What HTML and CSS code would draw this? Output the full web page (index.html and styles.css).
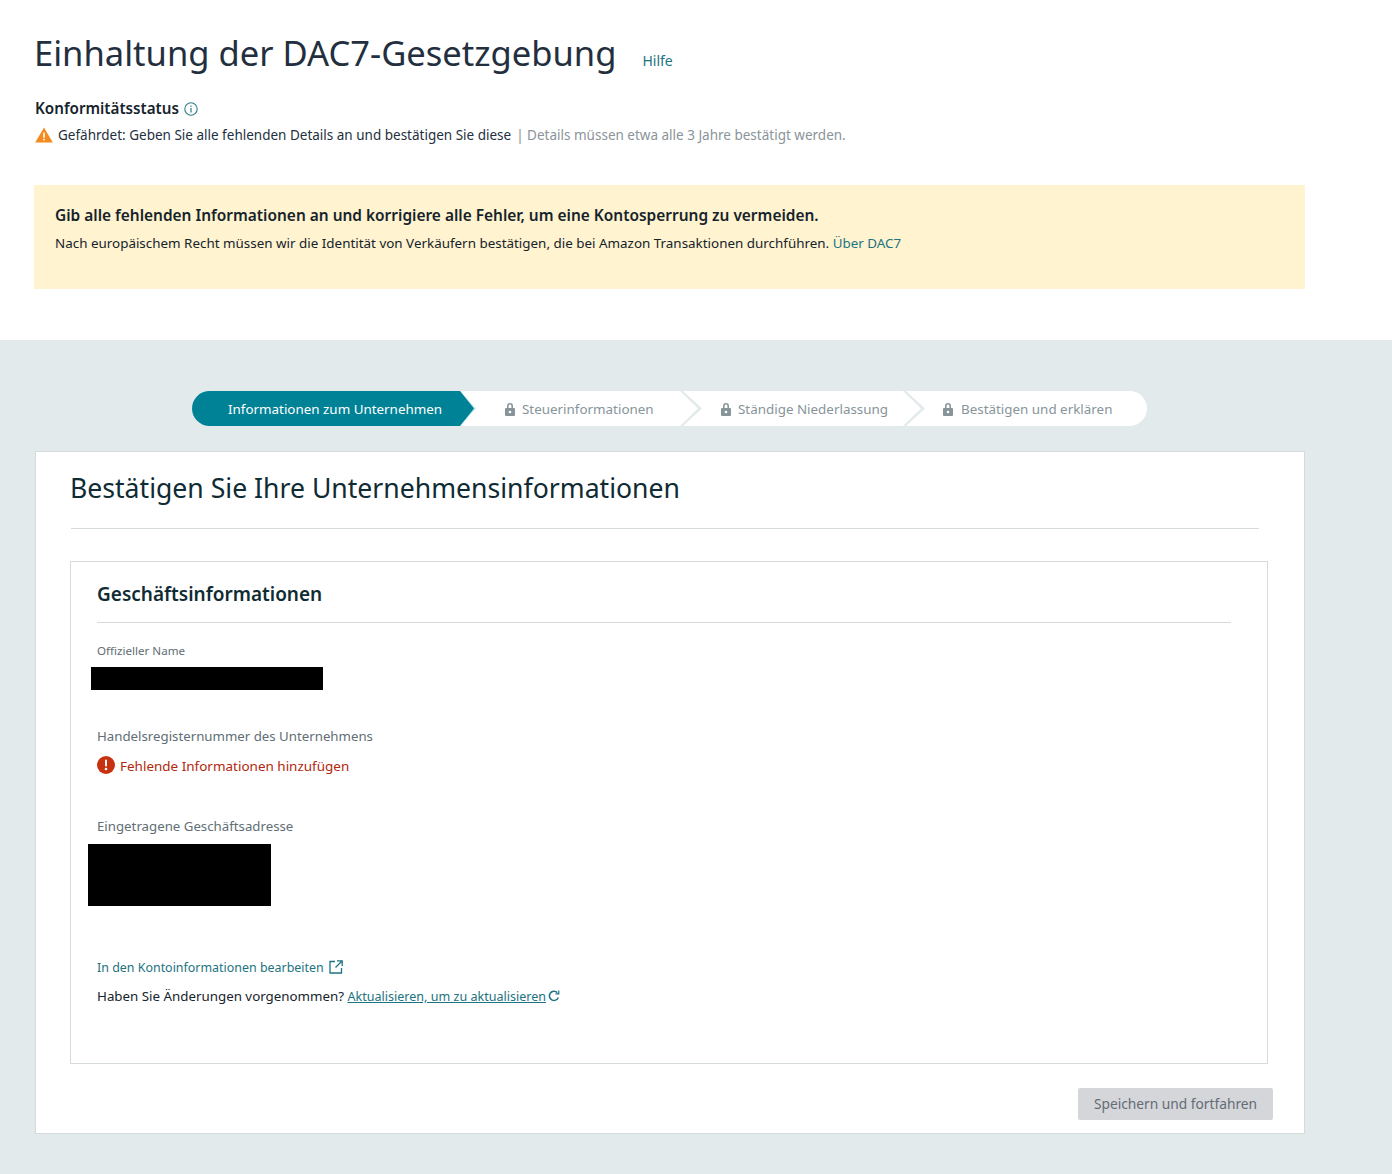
FILE: index.html
```html
<!DOCTYPE html>
<html lang="de">
<head>
	<meta charset="UTF-8">
	<title>Einhaltung der DAC7-Gesetzgebung</title>
	<link rel="stylesheet" href="styles.css">
</head>
<body>
	<div class="top">
		<div class="title-row">
			<h1>Einhaltung der DAC7-Gesetzgebung</h1>
			<a class="help" href="#">Hilfe</a>
		</div>
		<div class="status-head">
			<span>Konformitätsstatus</span>
			<svg class="info" width="14" height="14" viewBox="0 0 14 14"><circle cx="7" cy="7" r="6.200" fill="none" stroke="#2b7f8a" stroke-width="1.100"/><rect x="6.400" y="6" width="1.200" height="4.500" fill="#2b7f8a"/><rect x="6.400" y="3.600" width="1.200" height="1.300" fill="#2b7f8a"/></svg>
		</div>
		<div class="status-line">
			<svg width="18" height="16" viewBox="0 0 18 16"><path d="M9 .5 17.800 15.500H.2Z" fill="#f58a1f"/><rect x="8.200" y="5.500" width="1.600" height="5.200" fill="#fff"/><rect x="8.200" y="11.800" width="1.600" height="1.600" fill="#fff"/></svg>
			<span>Gefährdet: Geben Sie alle fehlenden Details an und bestätigen Sie diese</span>
			<span class="muted">| Details müssen etwa alle 3 Jahre bestätigt werden.</span>
		</div>
		<div class="banner">
			<strong>Gib alle fehlenden Informationen an und korrigiere alle Fehler, um eine Kontosperrung zu vermeiden.</strong>
			<p>Nach europäischem Recht müssen wir die Identität von Verkäufern bestätigen, die bei Amazon Transaktionen durchführen. <a href="#">Über DAC7</a></p>
		</div>
	</div>

	<div class="main">
		<div class="stepper">
			<div class="step active">Informationen zum Unternehmen</div>
			<div class="step step-tax">
				<svg class="lock" width="12" height="14" viewBox="0 0 12 14"><path d="M3 6V4a3 3 0 0 1 6 0v2H7.400V4a1.400 1.400 0 0 0-2.800 0v2Z" fill="#87949a"/><rect x="1" y="6" width="10" height="8" rx="1" fill="#87949a"/><circle cx="6" cy="10" r="1.300" fill="#fff"/></svg>
				Steuerinformationen
			</div>
			<div class="step step-perm">
				<svg class="lock" width="12" height="14" viewBox="0 0 12 14"><path d="M3 6V4a3 3 0 0 1 6 0v2H7.400V4a1.400 1.400 0 0 0-2.800 0v2Z" fill="#87949a"/><rect x="1" y="6" width="10" height="8" rx="1" fill="#87949a"/><circle cx="6" cy="10" r="1.300" fill="#fff"/></svg>
				Ständige Niederlassung
			</div>
			<div class="step step-last">
				<svg class="lock" width="12" height="14" viewBox="0 0 12 14"><path d="M3 6V4a3 3 0 0 1 6 0v2H7.400V4a1.400 1.400 0 0 0-2.800 0v2Z" fill="#87949a"/><rect x="1" y="6" width="10" height="8" rx="1" fill="#87949a"/><circle cx="6" cy="10" r="1.300" fill="#fff"/></svg>
				Bestätigen und erklären
			</div>
		</div>

		<div class="card">
			<h2>Bestätigen Sie Ihre Unternehmensinformationen</h2>
			<div class="box">
				<h3>Geschäftsinformationen</h3>
				<div class="label-small">Offizieller Name</div>
				<div class="redact redact-name"></div>
				<div class="label reg-label">Handelsregisternummer des Unternehmens</div>
				<div class="missing">
					<svg width="18" height="18" viewBox="0 0 18 18"><circle cx="9" cy="9" r="9" fill="#c7310f"/><rect x="8" y="3.500" width="2" height="7" rx="1" fill="#fff"/><circle cx="9" cy="13" r="1.300" fill="#fff"/></svg>
					<span>Fehlende Informationen hinzufügen</span>
				</div>
				<div class="label addr-label">Eingetragene Geschäftsadresse</div>
				<div class="redact redact-addr"></div>
				<a class="edit-link" href="#">In den Kontoinformationen bearbeiten
					<svg width="14" height="14" viewBox="0 0 14 14" fill="none" stroke="#1d7380" stroke-width="1.300"><path d="M6 1.500H1v11.500h11.500V8"/><path d="M8 .8h5.200V6M13 1 6.500 7.500"/></svg>
				</a>
				<div class="changes">Haben Sie Änderungen vorgenommen? <a href="#">Aktualisieren, um zu aktualisieren</a><svg width="12" height="12" viewBox="0 0 12 12" fill="none" stroke="#1d7380" stroke-width="1.500"><path d="M10.300 7.500A4.600 4.600 0 1 1 9.300 2.600"/><path d="M10.800 .5V3.800H7.500" stroke-width="1.200"/></svg></div>
			</div>
			<div class="actions">
				<button class="save">Speichern und fortfahren</button>
			</div>
		</div>
	</div>
</body>
</html>
```

FILE: styles.css
```css
* { box-sizing: border-box; }

body {
	margin: 0;
	font-family: "Noto Sans", "Liberation Sans", sans-serif;
	font-size: 14px;
	color: #232f3e;
	background: #fff;
}

a { color: #1d7380; text-decoration: none; }

.top {
	height: 340px;
	padding: 29px 87px 0 34px;
}

.title-row {
	display: flex;
	align-items: baseline;
	gap: 26px;
}
h1 {
	margin: 0;
	font-size: 34.550px;
	line-height: 48px;
	font-weight: 400;
	color: #232f3e;
}
.help { font-size: 14px; }

.status-head {
	display: flex;
	align-items: center;
	gap: 5px;
	margin-top: 19px;
	padding-left: 1px;
	font-size: 15.200px;
	font-weight: 600;
	color: #16232b;
	height: 24px;
}
.info { margin-top: 2px; }

.status-line {
	display: flex;
	align-items: center;
	gap: 5px;
	margin-top: 5px;
	padding-left: 1px;
	height: 20px;
	font-size: 13.500px;
	color: #232f3e;
}
.status-line .muted { color: #8a9499; }

.banner {
	margin-top: 40px;
	height: 104px;
	padding: 19px 20px 0 21px;
	background: #fff3d0;
	color: #16232b;
}
.banner strong { font-size: 15.440px; font-weight: 600; line-height: 22px; display: block; }
.banner p { margin: 7px 0 0; font-size: 13.420px; line-height: 20px; }

.main {
	height: 834px;
	padding: 51px 87px 0 35px;
	background: #e3eaeb;
}

.stepper {
	display: flex;
	width: 955px;
	height: 35px;
	margin-left: 157px;
	background: #fff;
	border-radius: 18px;
	color: #87949a;
	font-size: 13.400px;
}
.step {
	position: relative;
	display: flex;
	align-items: center;
	gap: 6px;
}
.step::after {
	content: "";
	position: absolute;
	top: 0;
	right: 0;
	width: 22px;
	height: 35px;
	background: #e3eaeb;
	clip-path: polygon(0 0, 3px 0, 100% 50%, 3px 100%, 0 100%, 18px 50%);
}
.active {
	width: 268px;
	margin-right: 14px;
	padding-left: 36px;
	background: #008296;
	color: #fff;
	border-radius: 18px 0 0 18px;
}
.active::before {
	content: "";
	position: absolute;
	top: 0;
	right: -16px;
	width: 16px;
	height: 35px;
	background: #c4e6ec;
	clip-path: polygon(0 0, 100% 50%, 0 100%);
}
.active::after {
	right: -14px;
	width: 14px;
	background: #008296;
	clip-path: polygon(0 0, 100% 50%, 0 100%);
}
.step-tax { width: 228px; padding-left: 30px; }
.step-perm { width: 223px; padding-left: 18px; }
.step-last { flex: 1; padding-left: 17px; gap: 7px; }
.step-last::after { display: none; }

.card {
	height: 683px;
	margin-top: 25px;
	padding: 0 0 0 35px;
	background: #fff;
	border: 1px solid #d5dbdb;
}
h2 {
	margin: 0;
	width: 1188px;
	height: 77px;
	padding-top: 17px;
	text-indent: -1px;
	font-size: 26.600px;
	line-height: 38px;
	font-weight: 400;
	color: #0f2b33;
	border-bottom: 1px solid #d5dbdb;
}

.box {
	width: 1198px;
	height: 503px;
	margin: 32px 0 0 -1px;
	padding: 0 36px 0 26px;
	border: 1px solid #d5dbdb;
	color: #16232b;
}
h3 {
	margin: 0;
	height: 61px;
	padding-top: 18px;
	font-size: 19px;
	line-height: 28px;
	font-weight: 600;
	color: #0f2b33;
	border-bottom: 1px solid #d5dbdb;
}

.label-small { margin-top: 20px; font-size: 11.600px; line-height: 16px; color: #616e75; }
.label { font-size: 13.250px; line-height: 20px; color: #616e75; }
.redact { background: #000; }
.redact-name { width: 232px; height: 23px; margin: 8px 0 0 -6px; }
.reg-label { margin-top: 36px; }
.missing {
	display: flex;
	align-items: center;
	gap: 5px;
	margin-top: 9px;
	height: 20px;
	color: #b1270b;
	font-size: 13.470px;
}
.missing span { padding-top: 2px; }
.addr-label { margin-top: 41px; }
.redact-addr { width: 183px; height: 62px; margin: 8px 0 0 -9px; }

.edit-link {
	display: flex;
	align-items: center;
	gap: 5px;
	margin-top: 51px;
	height: 20px;
	font-size: 12.450px;
}
.changes {
	margin-top: 9px;
	font-size: 13.340px;
	line-height: 20px;
	white-space: nowrap;
}
.changes a { text-decoration: underline; font-size: 12.550px; }
.changes svg { margin-left: 2px; vertical-align: -1px; }

.actions {
	display: flex;
	justify-content: flex-end;
	width: 1202px;
	margin-top: 24px;
}
.save {
	width: 195px;
	height: 32px;
	padding: 0 0 2px;
	border: 0;
	border-radius: 2px;
	background: #d5d6da;
	color: #646b75;
	font: inherit;
	font-size: 13.750px;
}
```
